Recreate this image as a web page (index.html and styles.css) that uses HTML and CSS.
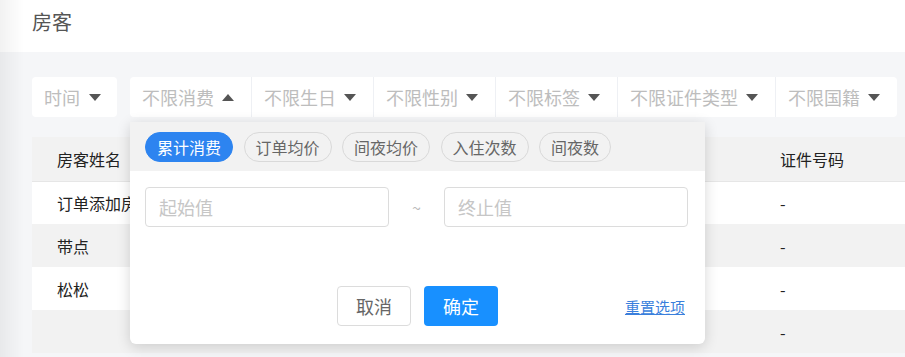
FILE: index.html
```html
<!DOCTYPE html>
<html lang="zh-CN">
<head>
  <meta charset="UTF-8" />
  <meta name="viewport" content="width=device-width, initial-scale=1.0"/>
  <title>房客</title>
  <link rel="stylesheet" href="styles.css">
</head>
<body>
  <div class="side-shadow"></div>
  <header class="page-head">
    <h1>房客</h1>
  </header>

  <main class="content">
    <div class="filters">
      <div class="filter-time">时间 <i class="caret"></i></div>
      <div class="filter-group">
        <div class="filter-item open">
          不限消费 <i class="caret up"></i>
          <div class="popover">
            <div class="pop-tabs">
              <button class="pill active">累计消费</button>
              <button class="pill">订单均价</button>
              <button class="pill">间夜均价</button>
              <button class="pill">入住次数</button>
              <button class="pill">间夜数</button>
            </div>
            <div class="pop-range">
              <input class="range-input" type="text" placeholder="起始值">
              <span class="range-sep">~</span>
              <input class="range-input" type="text" placeholder="终止值">
            </div>
            <div class="pop-actions">
              <span></span>
              <div class="btn-group">
                <button class="btn btn-cancel">取消</button>
                <button class="btn btn-ok">确定</button>
              </div>
              <a class="reset-link" href="#">重置选项</a>
            </div>
          </div>
        </div>
        <div class="filter-item">不限生日 <i class="caret"></i></div>
        <div class="filter-item">不限性别 <i class="caret"></i></div>
        <div class="filter-item">不限标签 <i class="caret"></i></div>
        <div class="filter-item">不限证件类型 <i class="caret"></i></div>
        <div class="filter-item">不限国籍 <i class="caret"></i></div>
      </div>
    </div>

    <table class="guest-table">
      <colgroup>
        <col class="col-md"><col class="col-md"><col class="col-md"><col class="col-lg">
        <col class="col-md"><col class="col-md">
      </colgroup>
      <thead>
        <tr><th>房客姓名</th><th>手机号</th><th>性别</th><th>生日</th><th>证件号码</th><th>国籍</th></tr>
      </thead>
      <tbody>
        <tr><td>订单添加房客</td><td>-</td><td>-</td><td>-</td><td>-</td><td>-</td></tr>
        <tr><td>带点</td><td>-</td><td>-</td><td>-</td><td>-</td><td>-</td></tr>
        <tr><td>松松</td><td>-</td><td>-</td><td>-</td><td>-</td><td>-</td></tr>
        <tr><td></td><td>-</td><td>-</td><td>-</td><td>-</td><td>-</td></tr>
      </tbody>
    </table>
  </main>
</body>
</html>
```

FILE: styles.css
```css
* {
  box-sizing: border-box;
}

html, body {
  margin: 0;
}

body {
  font-family: "Noto Sans CJK SC", "Noto Sans", sans-serif;
  background: #f5f6f8;
  color: #222;
  width: 905px;
  height: 357px;
  overflow: hidden;
}

.side-shadow {
  position: fixed;
  left: 0;
  top: 0;
  bottom: 0;
  width: 24px;
  background: linear-gradient(to right, rgba(0, 0, 0, 0.05), rgba(0, 0, 0, 0));
  z-index: 20;
  pointer-events: none;
}

.page-head {
  height: 52px;
  background: #fff;
  padding: 7px 0 0 32px;
}

.page-head h1 {
  margin: 0;
  font-size: 20px;
  font-weight: 400;
  color: #555;
}

.content {
  padding: 25px 0 0 32px;
}

.filters {
  display: flex;
  gap: 13px;
  height: 40px;
}

.filter-time,
.filter-item {
  display: flex;
  align-items: center;
  gap: 8px;
  font-size: 18px;
  color: #bdbdbd;
  white-space: nowrap;
}

.filter-time {
  width: 85px;
  padding-left: 12px;
  gap: 9px;
  background: #fff;
  border-radius: 4px;
}

.filter-group {
  display: flex;
  background: #fff;
  border-radius: 4px;
}

.filter-item {
  position: relative;
  padding: 0 17px 0 12px;
  border-left: 1px solid #eef0f4;
}

.filter-item:first-child {
  border-left: none;
}

.caret {
  width: 0;
  height: 0;
  border-left: 6px solid transparent;
  border-right: 6px solid transparent;
  border-top: 7px solid #555;
}

.caret.up {
  border-top: none;
  border-bottom: 7px solid #555;
}

/* popover under the open filter */
.popover {
  position: absolute;
  top: calc(100% + 5px);
  left: 0;
  width: 575px;
  background: #fff;
  border-radius: 0 0 6px 6px;
  box-shadow: 0 3px 14px rgba(0, 0, 0, 0.16);
  z-index: 10;
  color: #666;
}

.pop-tabs {
  height: 49px;
  padding: 10px 15px 0;
  display: flex;
  gap: 10.5px;
  background: #f2f2f2;
}

.pill {
  height: 30px;
  padding: 0 11px;
  border: 1px solid #d9d9d9;
  border-radius: 15px;
  background: transparent;
  font-family: inherit;
  font-size: 16px;
  line-height: 28px;
  color: #666;
}

.pill.active {
  background: #2d84f0;
  border-color: #2d84f0;
  color: #fff;
}

.pop-range {
  display: flex;
  align-items: center;
  padding: 16px 17px 0 15px;
}

.range-input {
  flex: 1;
  min-width: 0;
  height: 40px;
  padding: 0 13px;
  border: 1px solid #dcdcdc;
  border-radius: 4px;
  font-family: inherit;
  font-size: 18px;
  outline: none;
}

.range-input::placeholder {
  color: #c6c6c6;
}

.range-sep {
  width: 55px;
  text-align: center;
  font-size: 16px;
  color: #bbb;
}

.pop-actions {
  display: grid;
  grid-template-columns: 1fr auto 1fr;
  align-items: center;
  padding: 59px 20px 18px;
}

.btn-group {
  display: flex;
  gap: 13px;
}

.btn {
  width: 74px;
  height: 40px;
  border-radius: 4px;
  font-family: inherit;
  font-size: 18px;
}

.btn-cancel {
  background: #fff;
  border: 1px solid #dcdcdc;
  color: #666;
}

.btn-ok {
  background: #1890ff;
  border: none;
  color: #fff;
}

.reset-link {
  justify-self: end;
  font-size: 15px;
  color: #3a7fdc;
  text-decoration: underline;
}

/* table */
.guest-table {
  margin-top: 20px;
  width: 1083px;
  border-collapse: collapse;
  table-layout: fixed;
}

.col-md {
  width: 180px;
}

.col-lg {
  width: 183px;
}

.guest-table th,
.guest-table td {
  padding: 0 25px;
  text-align: left;
  font-size: 16px;
  font-weight: 400;
  color: #222;
  white-space: nowrap;
  overflow: hidden;
}

.guest-table th {
  height: 44px;
  background: #f2f2f2;
  border-bottom: 1px solid #e6e6e6;
}

.guest-table td {
  height: 43px;
  background: #fff;
}

.guest-table tbody tr:nth-child(even) td {
  background: #f2f2f2;
}
```
